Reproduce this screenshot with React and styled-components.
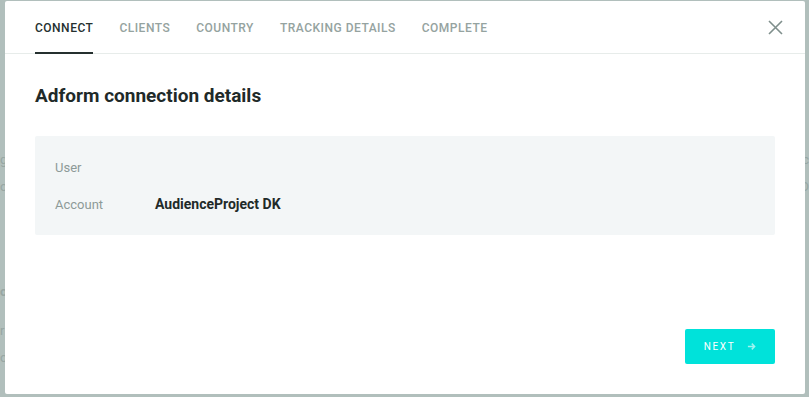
import React from 'react';
import styled, { createGlobalStyle } from 'styled-components';

const GlobalStyle = createGlobalStyle`
  html, body {
    margin: 0;
    padding: 0;
    background: #b1bfbc;
    font-family: Roboto, "Liberation Sans", sans-serif;
  }
`;

const tabs = ['Connect', 'Clients', 'Country', 'Tracking details', 'Complete'];

const Screen = styled.div`
  position: relative;
  width: 809px;
  height: 397px;
  overflow: hidden;
  background: #b1bfbc;
`;

const BackPage = styled.div`
  display: flex;
  flex-direction: column;
  padding: 152px 0 0 0;
  gap: 12px;
  color: #97a6a3;
  font-size: 13px;
`;

const BackLine = styled.div`
  display: flex;
  justify-content: space-between;
  margin-top: ${(p) => p.$gap || 0}px;
  font-weight: ${(p) => (p.$bold ? 700 : 400)};
`;

const Modal = styled.div`
  position: absolute;
  left: 5px;
  top: 1px;
  width: 800px;
  height: 393px;
  background: #ffffff;
  border-radius: 2px;
  display: flex;
  flex-direction: column;
`;

const Header = styled.div`
  display: flex;
  align-items: stretch;
  height: 52px;
  border-bottom: 1px solid #e7ecea;
  padding: 0 22px 0 30px;
`;

const TabList = styled.div`
  display: flex;
  gap: 26px;
  flex: 1;
`;

const Tab = styled.div`
  display: flex;
  align-items: center;
  padding-top: 2px;
  font-size: 12px;
  font-weight: 500;
  letter-spacing: 0.5px;
  text-transform: uppercase;
  color: ${(p) => (p.$active ? '#25302f' : '#95a3a0')};
  border-bottom: 2px solid ${(p) => (p.$active ? '#25302f' : 'transparent')};
  margin-bottom: -1px;
`;

const CloseButton = styled.button`
  border: 0;
  background: none;
  padding: 0;
  width: 16px;
  display: flex;
  align-items: center;
  justify-content: center;
  cursor: pointer;
`;

const Body = styled.div`
  flex: 1;
  display: flex;
  flex-direction: column;
  padding: 30px 30px 30px 30px;
`;

const Title = styled.h2`
  margin: 0;
  font-size: 19px;
  font-weight: 700;
  color: #1f2a29;
  line-height: 24px;
`;

const Panel = styled.div`
  margin-top: 28px;
  background: #f3f6f7;
  border-radius: 2px;
  padding: 21px 20px 21px;
  display: flex;
  flex-direction: column;
  gap: 17px;
`;

const Row = styled.div`
  display: grid;
  grid-template-columns: 100px 1fr;
  align-items: center;
  height: 20px;
`;

const Label = styled.span`
  font-size: 13px;
  color: #8d9a98;
`;

const Value = styled.span`
  font-size: 14px;
  font-weight: 700;
  color: #1f2a29;
`;

const Footer = styled.div`
  margin-top: auto;
  display: flex;
  justify-content: flex-end;
`;

const NextButton = styled.button`
  width: 90px;
  height: 35px;
  border: 0;
  border-radius: 2px;
  background: #00e2da;
  color: #ffffff;
  font-family: Roboto, "Liberation Sans", sans-serif;
  font-size: 10px;
  font-weight: 400;
  letter-spacing: 1.6px;
  display: flex;
  align-items: center;
  justify-content: center;
  gap: 12px;
`;

function Arrow() {
  return (
    <svg width="9" height="9" viewBox="0 0 10 10" fill="none">
      <path d="M1 5h7.5M5.3 1.8L8.5 5 5.3 8.2" stroke="#9ff4f0" strokeWidth="1.6" />
    </svg>
  );
}

function CloseIcon() {
  return (
    <svg width="15" height="15" viewBox="0 0 15 15" fill="none">
      <path d="M1 1l13 13M14 1L1 14" stroke="#7f8f8c" strokeWidth="1.6" />
    </svg>
  );
}

export default function App() {
  return (
    <Screen>
      <GlobalStyle />
      <BackPage>
        <BackLine>g<span>c</span></BackLine>
        <BackLine>o<span>D</span></BackLine>
        <BackLine $gap={78} $bold>o</BackLine>
        <BackLine $gap={12}>r</BackLine>
        <BackLine>o</BackLine>
      </BackPage>
      <Modal>
        <Header>
          <TabList>
            {tabs.map((t, i) => (
              <Tab key={t} $active={i === 0}>{t}</Tab>
            ))}
          </TabList>
          <CloseButton aria-label="Close">
            <CloseIcon />
          </CloseButton>
        </Header>
        <Body>
          <Title>Adform connection details</Title>
          <Panel>
            <Row>
              <Label>User</Label>
              <Value />
            </Row>
            <Row>
              <Label>Account</Label>
              <Value>AudienceProject DK</Value>
            </Row>
          </Panel>
          <Footer>
            <NextButton>
              NEXT <Arrow />
            </NextButton>
          </Footer>
        </Body>
      </Modal>
    </Screen>
  );
}
